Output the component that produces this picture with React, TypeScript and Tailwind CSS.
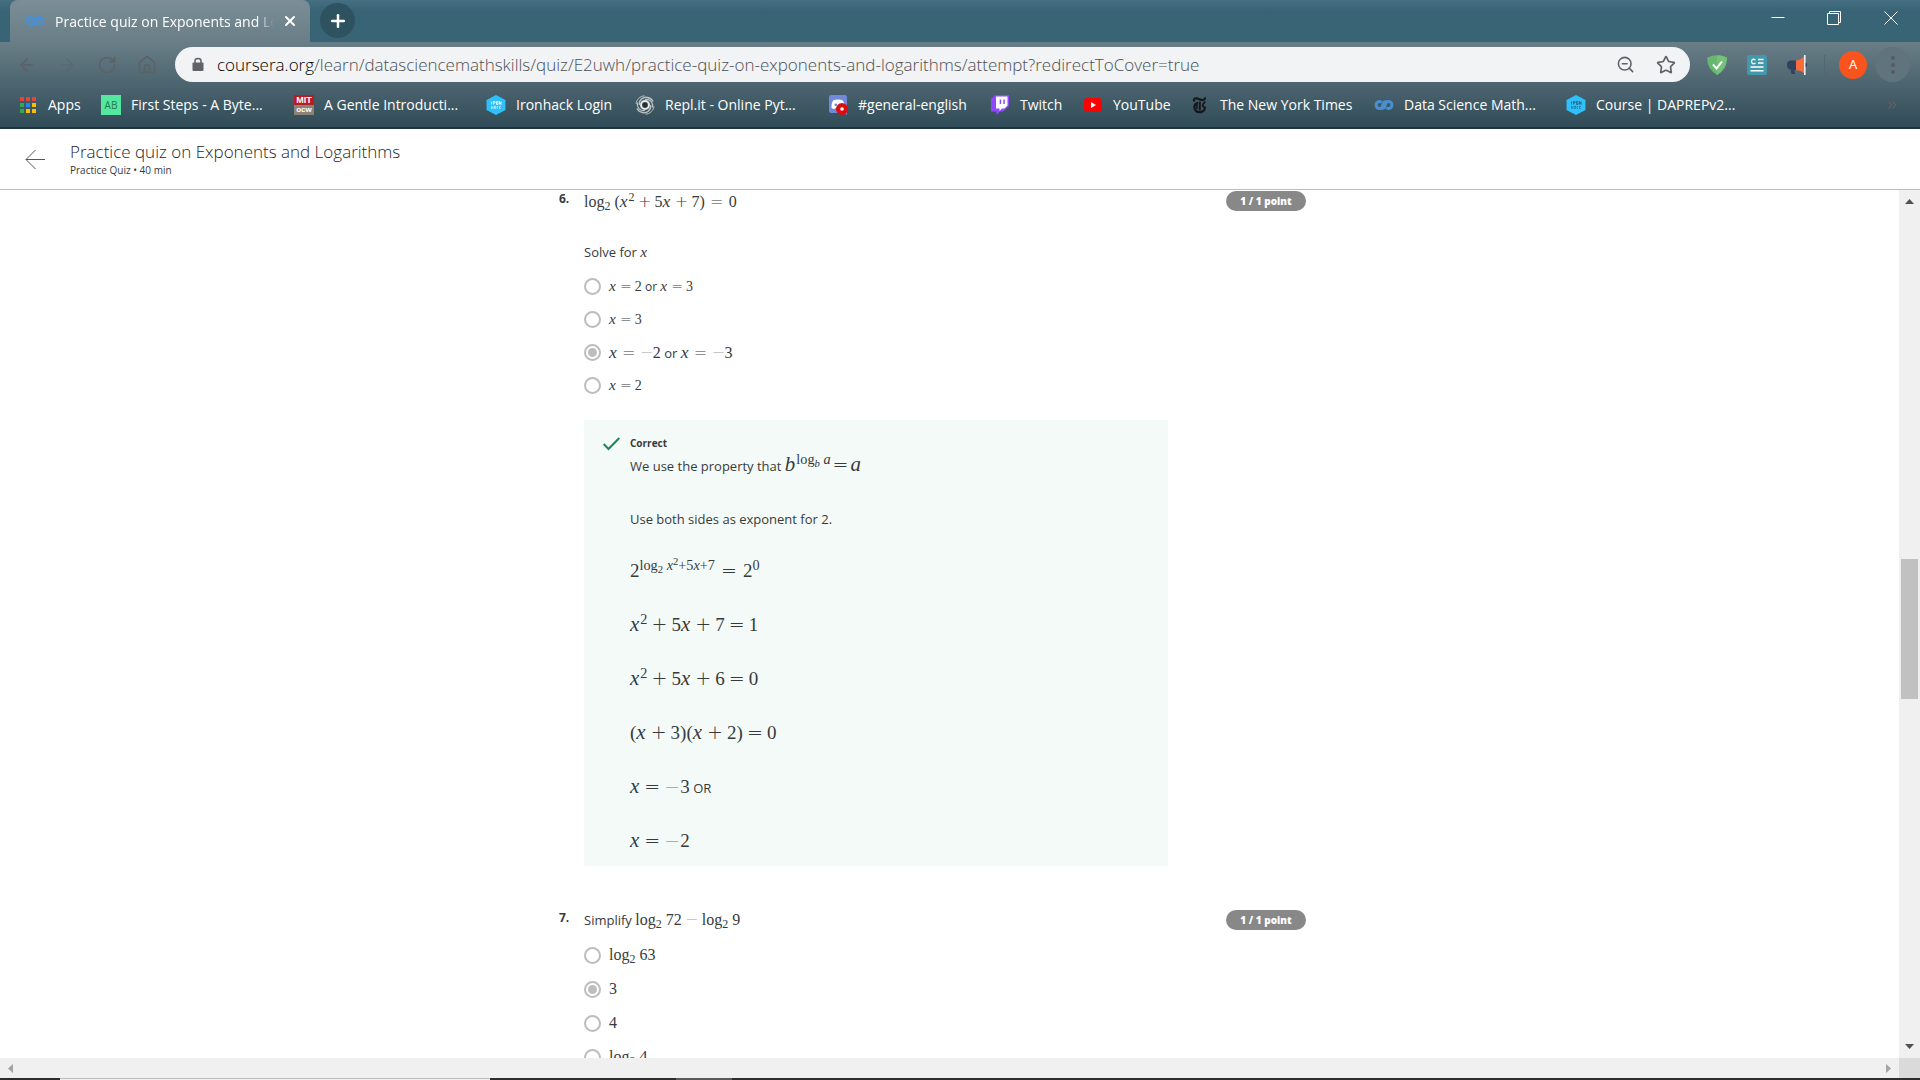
import type { ReactNode } from "react";
import { ArrowLeft, ArrowRight, House, Plus, RotateCw, Star, X, ZoomOut } from "lucide-react";

/* ---------- icons ---------- */

function InfinityIcon() {
  return (
    <svg viewBox="0 0 20 20" className="size-5" fill="none" stroke="#4a8fd0" strokeWidth="3">
      <path d="M13.2 7.4C12.2 6.3 10.600 6.400 9.600 8L8.400 11.200C7.600 13.300 5.900 14 4.400 13.400C1.400 12.300 1.400 7.700 4.400 6.700C5.700 6.200 6.900 6.700 7.600 7.600" />
      <path d="M7 12.600C8 13.700 9.500 13.600 10.400 12L11.600 8.800C12.400 6.700 14.100 6 15.600 6.600C18.600 7.700 18.600 12.300 15.600 13.300C14.300 13.800 13.100 13.300 12.400 12.400" />
    </svg>
  );
}

function AppsGrid() {
  const colors = ["#ea4335", "#ea4335", "#ea4335", "#34a853", "#1a8cf0", "#fbbc04", "#34a853", "#fbbc04", "#fbbc04"];
  return (
    <svg viewBox="0 0 20 20" className="size-5">
      {colors.map((c, i) => (
        <rect key={i} x={2 + (i % 3) * 6} y={2 + Math.floor(i / 3) * 6} width="4" height="4" fill={c} />
      ))}
    </svg>
  );
}

function AbIcon() {
  return <span className="flex size-5 items-center justify-center bg-[#55e6a0] text-[10px] leading-none text-[#1d7a4c]">AB</span>;
}

function MitIcon() {
  return (
    <span className="flex size-5 flex-col overflow-hidden font-['Liberation_Sans'] text-[9px] leading-[10px] font-bold text-white">
      <span className="bg-[#b71c20] text-center">MIT</span>
      <span className="flex justify-center bg-[#8b8378] text-[8px]">ocw</span>
    </span>
  );
}

function IronIcon({ dark = false }: { dark?: boolean }) {
  return (
    <svg viewBox="0 0 20 20" className="size-5">
      <path d="M10 0L19.500 5V15L10 20L0.500 15V5Z" fill="#2dc0fb" />
      <g fill="none" stroke={dark ? "#2b6c8c" : "#d8f3ff"} strokeWidth="1">
        <path d="M5.500 6.500V9.500M7.500 9.500V6.500H9V8H7.500M10.500 6.500H12V9.500H10.500ZM13.500 9.500V6.500L15 9.500V6.500" />
        <path d="M5.500 11V14M5.500 12.500H7M7 11V14M8.500 14V11H9.500V14M12 11.500H11V13.500H12M13.500 11V14M15 11L13.500 12.500L15 14" opacity="0.6" />
      </g>
    </svg>
  );
}

function ReplIcon() {
  return (
    <svg viewBox="0 0 20 20" className="size-5" fill="none" stroke="#b9bfc2" strokeWidth="1.500">
      <circle cx="10" cy="10" r="4" strokeWidth="2" stroke="#e8e8e8" />
      <circle cx="10" cy="10" r="2.400" fill="#2a2f32" stroke="none" />
      <path d="M4.500 10C3.500 5 8 1.500 12.500 2.500C15 3 17 4.500 18 6.500" />
      <path d="M15.500 10C16.500 15 12 18.500 7.500 17.500C5 17 3 15.500 2 13.500" />
      <path d="M10 4.500C15 3.500 18.500 8 17.500 12.500" strokeWidth="1.200" />
      <path d="M10 15.500C5 16.500 1.500 12 2.500 7.500" strokeWidth="1.200" />
      <path d="M1 9C1.500 4.500 5 1 9.500 0.800M19 11C18.500 15.500 15 19 10.500 19.200" strokeWidth="1" />
    </svg>
  );
}

function DiscordIcon() {
  return (
    <svg viewBox="0 0 20 20" className="size-5">
      <path d="M3 0H17Q19 0 19 2V20L16 18H3Q1 18 1 16V2Q1 0 3 0Z" fill="#7289da" />
      <path d="M5 5.500Q10 3.500 15 5.500Q17 9 16.500 13Q15 14 13.500 14L12.500 13H7.500L6.500 14Q5 14 3.500 13Q3 9 5 5.500Z" fill="#fff" />
      <circle cx="7.800" cy="9.800" r="1.400" fill="#7289da" />
      <circle cx="14" cy="14" r="6" fill="#e00b0b" />
      <circle cx="14" cy="14" r="1.800" fill="#fff" />
    </svg>
  );
}

function TwitchIcon() {
  return (
    <svg viewBox="0 0 20 20" className="size-5">
      <path d="M5 0H19V11L13 16.500H10L6.500 20V16.500H1V4Z" fill="#9146ff" />
      <path d="M6 1.500H17.500V10.500L14.500 13.500H12L9.500 16V13.500H6Z" fill="#fff" />
      <path d="M9.700 4.500H11.200V9H9.700ZM13.300 4.500H14.800V9H13.300Z" fill="#9146ff" />
    </svg>
  );
}

function YoutubeIcon() {
  return (
    <svg viewBox="0 0 20 20" className="size-5">
      <rect x="1" y="3" width="18" height="14" rx="3.500" fill="#f00" />
      <path d="M8 7L13 10L8 13Z" fill="#fff" />
    </svg>
  );
}

function TimesIcon() {
  return (
    <svg viewBox="0 0 20 20" className="size-5" fill="none" stroke="#15181a" strokeWidth="2.200">
      <path d="M4.500 6.500C3 4.500 4.500 3 6.500 3.300C9 3.800 11 5.200 13 5C14.800 4.800 15.300 3.500 14.500 2.500" />
      <path d="M15 12C15 15.500 12.500 17.200 9.800 17.200C6.300 17.200 4.200 14.800 4.300 12C4.400 9.500 6 8.200 8 7.500" />
      <path d="M9.800 6.500V15.500" strokeWidth="2" />
      <path d="M6.800 9V14M15.500 12C14 12.300 12.600 11.500 12.800 10C13 8.600 14.500 8 15 6.500" strokeWidth="1.800" />
    </svg>
  );
}

function LockIcon() {
  return (
    <svg viewBox="0 0 12 16" className="h-4 w-3" fill="#5f6368">
      <path d="M1.500 5.500H10.500Q11.500 5.500 11.500 6.500V13Q11.500 14 10.500 14H1.500Q0.500 14 0.500 13V6.500Q0.500 5.500 1.500 5.500Z" />
      <path d="M3 6V4Q3 1.500 6 1.500Q9 1.500 9 4V6" fill="none" stroke="#5f6368" strokeWidth="1.500" />
    </svg>
  );
}

function ShieldIcon() {
  return (
    <svg viewBox="0 0 20 20" className="size-5">
      <path d="M0.300 2.500Q5.500 0.300 10 0.300Q14.500 0.300 19.700 2.500Q20.500 13.500 10 20Q-0.500 13.500 0.300 2.500Z" fill="#67b76f" />
      <path d="M10 0.300Q14.500 0.300 19.700 2.500Q20.500 13.500 10 20Z" fill="#74c279" />
      <path d="M6 9.500L9.500 13.500L15 6.500" fill="none" stroke="#fff" strokeWidth="2" />
    </svg>
  );
}

function ReaderIcon() {
  return (
    <svg viewBox="0 0 20 20" className="size-5">
      <rect width="20" height="20" rx="2" fill="#4199ab" />
      <path d="M8.500 5Q5 3 4.500 6.500Q5 10 8.500 8.200" fill="none" stroke="#fff" strokeWidth="1.300" />
      <path d="M11 4.500H16.500M11 8H16.500M3.500 12H16.500M3.500 15.800H16.500" stroke="#fff" strokeWidth="1.600" />
    </svg>
  );
}

function MegaphoneIcon() {
  return (
    <svg viewBox="0 0 20 20" className="size-5">
      <path d="M0 10Q0 5.500 4 5.500H9V15H7.500L8 19H4.500L3.500 14.500Q0 14 0 10Z" fill="#2f425f" />
      <path d="M9 5.500Q14 5 17 1V18Q14 15.500 9 15Z" fill="#fa6b3a" />
      <rect x="17" y="0" width="1.600" height="20" fill="#f1f1f1" />
      <path d="M18.600 7.500Q20 8 20 10Q20 11.500 18.600 12Z" fill="#2f425f" />
    </svg>
  );
}

/* ---------- browser chrome ---------- */

function TabStrip() {
  return (
    <div className="flex h-[42px] items-start bg-linear-to-b from-[#466f82] via-[#386476] via-25% to-[#386476] pl-[10px]">
      <div className="flex h-[42px] w-[300px] items-center rounded-t-lg bg-linear-to-b from-[#7b8e96] to-[#697e87] pr-[12px] pl-[15px]">
        <InfinityIcon />
        <span className="ml-[10px] w-[219px] overflow-hidden mask-r-from-92% text-[14px] whitespace-nowrap text-white">
          Practice quiz on Exponents and Logarithms
        </span>
        <button aria-label="Close tab" className="ml-auto text-white">
          <X className="size-4" strokeWidth={3} />
        </button>
      </div>
      <button aria-label="New tab" className="mt-[3px] ml-[10px] flex size-[35px] items-center justify-center rounded-full bg-[#2f5261] text-white">
        <Plus className="size-5" strokeWidth={3} />
      </button>
      <div className="ml-auto flex h-9 text-white">
        <button aria-label="Minimize" className="flex w-14 items-center justify-center">
          <svg viewBox="0 0 14 14" className="size-[14px]" stroke="currentColor"><path d="M0.500 6.500H13.500" /></svg>
        </button>
        <button aria-label="Restore" className="flex w-14 items-center justify-center">
          <svg viewBox="0 0 14 14" className="size-[14px]" fill="none" stroke="currentColor">
            <path d="M0.500 2.500H11.500V13.500H0.500ZM2.500 2.500V0.500H13.500V11.500H11.500" />
          </svg>
        </button>
        <button aria-label="Close" className="flex w-[58px] items-center justify-center">
          <svg viewBox="0 0 14 14" className="size-[14px]" stroke="currentColor"><path d="M0.500 0.500L13.500 13.500M13.500 0.500L0.500 13.500" /></svg>
        </button>
      </div>
    </div>
  );
}

function Toolbar() {
  return (
    <div className="flex h-[45px] items-center pr-[10px] pl-[17px]">
      <div className="flex w-[158px] gap-5 text-[#5b6266]">
        <button aria-label="Back"><ArrowLeft className="size-5" /></button>
        <button aria-label="Forward" className="opacity-50"><ArrowRight className="size-5" /></button>
        <button aria-label="Reload"><RotateCw className="size-5" /></button>
        <button aria-label="Home"><House className="size-5" /></button>
      </div>
      <div className="flex h-[35px] flex-1 items-center rounded-full bg-[#f1f3f4] pr-[14px] pl-[17px] text-[17px] font-light text-[#4c5054]">
        <LockIcon />
        <a href="#url" className="ml-[13px] flex-1 whitespace-nowrap">
          <span className="text-black">coursera.org</span>
          /learn/datasciencemathskills/quiz/E2uwh/practice-quiz-on-exponents-and-logarithms/attempt?redirectToCover=true
        </a>
        <button aria-label="Zoom" className="text-[#5f6368]"><ZoomOut className="size-[19px]" strokeWidth={2} /></button>
        <button aria-label="Bookmark this page" className="ml-[21px] text-[#5f6368]"><Star className="size-5" strokeWidth={2} /></button>
      </div>
      <div className="ml-[17px] flex items-center gap-5">
        <ShieldIcon />
        <ReaderIcon />
        <MegaphoneIcon />
      </div>
      <span className="ml-[17px] h-5 w-px bg-[#51666f]" />
      <button className="ml-[14px] flex size-7 items-center justify-center rounded-full bg-[#f9541d] text-[13px] text-white">A</button>
      <button aria-label="Menu" className="ml-2 flex size-[35px] flex-col items-center justify-center gap-[3px] rounded-full bg-[#5f747d]">
        <span className="size-1 rounded-full bg-[#585c60]" />
        <span className="size-1 rounded-full bg-[#585c60]" />
        <span className="size-1 rounded-full bg-[#585c60]" />
      </button>
    </div>
  );
}

function Bookmark({ icon, width, children }: { icon: ReactNode; width: string; children: ReactNode }) {
  return (
    <a href="#bookmark" className={`flex items-center gap-[10px] whitespace-nowrap ${width}`}>
      {icon}
      <span>{children}</span>
    </a>
  );
}

function BookmarksBar() {
  return (
    <nav className="flex h-[42px] items-center border-b-2 border-[#1d343f] pb-[5px] pl-[18px] text-[14px] text-white">
      <Bookmark icon={<AppsGrid />} width="w-[83px]">Apps</Bookmark>
      <Bookmark icon={<AbIcon />} width="w-[193px]">First Steps - A Byte...</Bookmark>
      <Bookmark icon={<MitIcon />} width="w-[192px]">A Gentle Introducti...</Bookmark>
      <Bookmark icon={<IronIcon />} width="w-[149px]">Ironhack Login</Bookmark>
      <Bookmark icon={<ReplIcon />} width="w-[193px]">Repl.it - Online Pyt...</Bookmark>
      <Bookmark icon={<DiscordIcon />} width="w-[162px]">#general-english</Bookmark>
      <Bookmark icon={<TwitchIcon />} width="w-[93px]">Twitch</Bookmark>
      <Bookmark icon={<YoutubeIcon />} width="w-[107px]">YouTube</Bookmark>
      <Bookmark icon={<TimesIcon />} width="w-[184px]">The New York Times</Bookmark>
      <Bookmark icon={<InfinityIcon />} width="w-[192px]">Data Science Math...</Bookmark>
      <Bookmark icon={<IronIcon dark />} width="w-[193px]">Course | DAPREPv2...</Bookmark>
      <button aria-label="More bookmarks" className="mr-6 ml-auto text-[#5f5f63]">
        <svg viewBox="0 0 8 8" className="size-2" fill="none" stroke="currentColor" strokeWidth="1.500">
          <path d="M0.500 0.500L3.500 4L0.500 7.500M4.500 0.500L7.500 4L4.500 7.500" />
        </svg>
      </button>
    </nav>
  );
}

/* ---------- math notation ---------- */

function Tex({ size, children }: { size: string; children: ReactNode }) {
  return <span className={`font-['Liberation_Serif',serif] whitespace-nowrap ${size}`}>{children}</span>;
}

function V({ children }: { children: ReactNode }) {
  return <i className="pr-px text-[1.1em] leading-none">{children}</i>;
}

function Op({ children, width = "w-5" }: { children: ReactNode; width?: string }) {
  return (
    <span className={`inline-block text-center font-['DejaVu_Sans_Light','DejaVu_Sans'] leading-none font-extralight ${width}`}>{children}</span>
  );
}

function Minus({ width = "w-[13px]" }: { width?: string }) {
  return (
    <span className="text-[#9a9d9e]">
      <Op width={width}>−</Op>
    </span>
  );
}

/* ---------- quiz ---------- */

function Option({ name, checked = false, children }: { name: string; checked?: boolean; children: ReactNode }) {
  return (
    <label className="flex h-full items-center gap-2 text-[12px]">
      <input
        type="radio"
        name={name}
        defaultChecked={checked}
        className="size-[17px] shrink-0 appearance-none rounded-full border-2 border-[#bdbdbd] bg-white bg-clip-content p-[2px] checked:bg-[#bdbdbd]"
      />
      <span>{children}</span>
    </label>
  );
}

function Points() {
  return (
    <span className="ml-[58px] flex h-5 w-20 shrink-0 items-center justify-center rounded-full bg-[#888] text-[10px] font-extrabold text-white">
      1 / 1 point
    </span>
  );
}

function Scrollbar() {
  return (
    <div aria-hidden="true" className="flex w-[21px] shrink-0 flex-col items-center bg-[#f0f0f0] pt-[9px] pb-[9px]">
      <svg viewBox="0 0 9 5" className="h-[5px] w-[9px]"><path d="M0 5L4.500 0L9 5Z" fill="#505050" /></svg>
      <span className="mt-[355px] h-[140px] w-[17px] bg-[#c1c1c1]" />
      <svg viewBox="0 0 9 5" className="mt-auto h-[5px] w-[9px]"><path d="M0 0L4.500 5L9 0Z" fill="#505050" /></svg>
    </div>
  );
}

export default function App() {
  return (
    <div className="flex h-screen flex-col overflow-hidden bg-white font-['Open_Sans',sans-serif] text-[#373a3c]">
      <TabStrip />
      <div className="bg-linear-to-b from-[#697e87] to-[#2f4b57]">
        <Toolbar />
        <BookmarksBar />
      </div>

      <header className="flex h-[61px] shrink-0 items-center border-b border-[#bdbdbd] pl-[25px]">
        <button aria-label="Back to course">
          <svg viewBox="0 0 20 20" className="size-5" fill="none" stroke="#555"><path d="M20 10.500H1M10.500 1L1 10.500L10.500 20" /></svg>
        </button>
        <div className="ml-[25px] pb-[3px]">
          <h1 className="text-[17px] leading-6 font-light text-[#1f1f1f]">Practice quiz on Exponents and Logarithms</h1>
          <p className="text-[10px] leading-3">Practice Quiz • 40 min</p>
        </div>
      </header>

      <div className="flex min-h-0 flex-1">
        <main className="min-w-0 flex-1 overflow-hidden">
          <div className="mx-auto max-w-[781px]">
            <section className="flex items-start pt-px">
              <span className="w-[25px] shrink-0 text-[12px] leading-4 font-bold">6.</span>
              <div className="min-w-0 flex-1">
                <p className="h-5 leading-5">
                  <Tex size="text-[16px]">
                    log<sub>2</sub> (<V>x</V><sup>2</sup><Op>+</Op>5<V>x</V><Op>+</Op>7)<Op width="w-6">=</Op>0
                  </Tex>
                </p>
                <p className="mt-[31px] h-5 text-[13px] leading-5">
                  Solve for <Tex size="text-[14px]"><V>x</V></Tex>
                </p>
                <div className="mt-2 grid auto-rows-[33px]">
                  <Option name="q6">
                    <Tex size="text-[14px]"><V>x</V><Op width="w-[18px]">=</Op>2</Tex> or <Tex size="text-[14px]"><V>x</V><Op width="w-[18px]">=</Op>3</Tex>
                  </Option>
                  <Option name="q6"><Tex size="text-[14px]"><V>x</V><Op width="w-[18px]">=</Op>3</Tex></Option>
                  <Option name="q6" checked>
                    <span className="text-[13px]">
                      <Tex size="text-[16px]"><V>x</V><Op width="w-[22px]">=</Op><Minus />2</Tex> or <Tex size="text-[16px]"><V>x</V><Op width="w-[22px]">=</Op><Minus />3</Tex>
                    </span>
                  </Option>
                  <Option name="q6"><Tex size="text-[14px]"><V>x</V><Op width="w-[18px]">=</Op>2</Tex></Option>
                </div>

                <div className="mt-[18px] flex bg-[#f4faf8] pt-4 pb-[13px] pl-[19px]">
                  <svg viewBox="0 0 17 14" className="mt-px h-[14px] w-[17px]" fill="none" stroke="#1f8354" strokeWidth="2">
                    <path d="M0.700 7L5.500 12L16.300 1" />
                  </svg>
                  <div className="ml-[10px] text-[13px]">
                    <h2 className="text-[10px] leading-[15px] font-bold">Correct</h2>
                    <div className="grid auto-rows-[24px] gap-[30px] leading-6">
                      <p className="leading-7">
                        We use the property that{" "}
                        <Tex size="text-[19px]"><V>b</V><sup>log<sub><i>b</i></sub> <i>a</i></sup><Op>=</Op><V>a</V></Tex>
                      </p>
                      <p className="leading-7">Use both sides as exponent for 2.</p>
                      <p>
                        <Tex size="text-[19px]">
                          2<sup>log<sub>2</sub> <i>x</i><sup>2</sup>+5<i>x</i>+7</sup><Op width="w-7">=</Op>2<sup>0</sup>
                        </Tex>
                      </p>
                      <p>
                        <Tex size="text-[19px]"><V>x</V><sup>2</sup><Op width="w-6">+</Op>5<V>x</V><Op width="w-6">+</Op>7<Op width="w-6">=</Op>1</Tex>
                      </p>
                      <p>
                        <Tex size="text-[19px]"><V>x</V><sup>2</sup><Op width="w-6">+</Op>5<V>x</V><Op width="w-6">+</Op>6<Op width="w-6">=</Op>0</Tex>
                      </p>
                      <p>
                        <Tex size="text-[19px]">(<V>x</V><Op width="w-6">+</Op>3)(<V>x</V><Op width="w-6">+</Op>2)<Op width="w-6">=</Op>0</Tex>
                      </p>
                      <p>
                        <Tex size="text-[19px]"><V>x</V><Op width="w-6">=</Op><Minus width="w-4" />3</Tex> OR
                      </p>
                      <p>
                        <Tex size="text-[19px]"><V>x</V><Op width="w-6">=</Op><Minus width="w-4" />2</Tex>
                      </p>
                    </div>
                  </div>
                </div>
              </div>
              <Points />
              <span className="w-[34px] shrink-0" />
            </section>

            <section className="mt-[44px] flex items-start">
              <span className="w-[25px] shrink-0 text-[12px] leading-4 font-bold">7.</span>
              <div className="min-w-0 flex-1">
                <p className="h-5 text-[13px] leading-5">
                  Simplify{" "}
                  <Tex size="text-[16px]">log<sub>2</sub> 72<span className="text-[#9a9d9e]"><Op>−</Op></span>log<sub>2</sub> 9</Tex>
                </p>
                <div className="mt-2 grid auto-rows-[34px]">
                  <Option name="q7"><Tex size="text-[16px]">log<sub>2</sub> 63</Tex></Option>
                  <Option name="q7" checked><Tex size="text-[16px]">3</Tex></Option>
                  <Option name="q7"><Tex size="text-[16px]">4</Tex></Option>
                  <Option name="q7"><Tex size="text-[16px]">log<sub>2</sub> 4</Tex></Option>
                </div>
              </div>
              <Points />
              <span className="w-[34px] shrink-0" />
            </section>
          </div>
        </main>
        <Scrollbar />
      </div>

      <div aria-hidden="true" className="flex h-5 shrink-0 items-center bg-[#f0f0f0] pl-2">
        <svg viewBox="0 0 5 9" className="h-[9px] w-[5px]"><path d="M5 0L0 4.500L5 9Z" fill="#a3a3a3" /></svg>
        <svg viewBox="0 0 5 9" className="mr-2 ml-auto h-[9px] w-[5px]"><path d="M0 0L5 4.500L0 9Z" fill="#a3a3a3" /></svg>
        <span className="h-5 w-[21px] bg-[#dadada]" />
      </div>
      <div aria-hidden="true" className="flex h-[2px] shrink-0 bg-[#2d2d2d]">
        <span className="ml-[60px] w-[430px] border-t border-[#bdbdbd] bg-[#f0f0f0]" />
        <span className="ml-[186px] w-14 bg-[#5a5a5a]" />
      </div>
    </div>
  );
}
